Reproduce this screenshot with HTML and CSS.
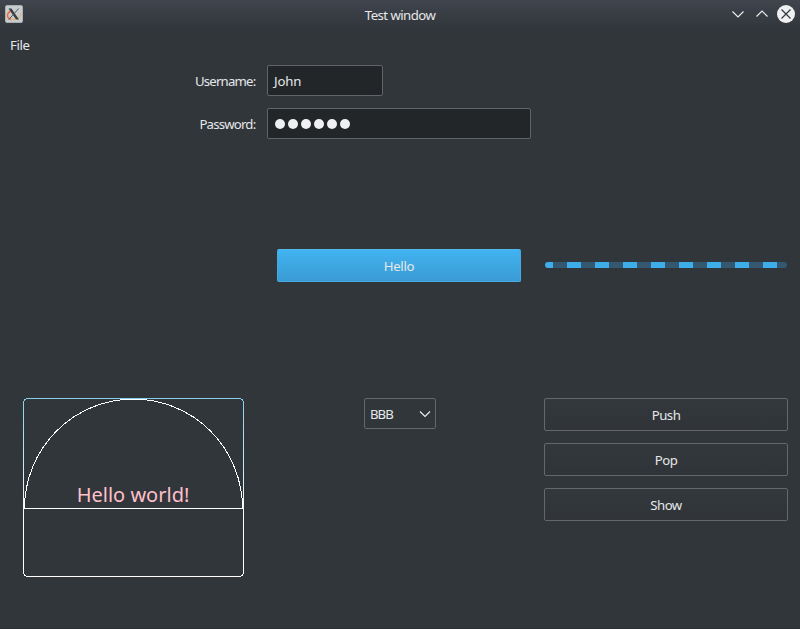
FILE: index.html
```html
<!DOCTYPE html>
<html lang="en">
<head>
<meta charset="utf-8">
<title>Test window</title>
<link rel="stylesheet" href="styles.css">
</head>
<body>
<div class="window">
  <header class="titlebar">
    <svg class="app-icon" width="18" height="18" viewBox="0 0 18 18">
      <rect x=".5" y=".5" width="17" height="17" rx="1.5" fill="#c9ccce" stroke="#aaaeb1"/>
      <path d="M6.500 6C1.500 7.500 1 13 6 14.300" fill="none" stroke="#f06a3c" stroke-width="1.500"/>
      <path d="M6 14.300C11 15.500 17 12 15.500 8" fill="none" stroke="#dfb583" stroke-width="1.300"/>
      <path d="M3.500 3.500h3l7.500 11h-3z" fill="#3a3e41"/>
      <path d="M13.700 3.500L3.800 14.500" stroke="#54585a" stroke-width="1"/>
    </svg>
    <span class="title">Test window</span>
    <div class="controls">
      <svg width="18" height="18" viewBox="0 0 18 18"><path d="M3.500 6.500L9 12l5.500-5.500" class="stroke"/></svg>
      <svg width="18" height="18" viewBox="0 0 18 18"><path d="M3.500 11.500L9 6l5.500 5.500" class="stroke"/></svg>
      <svg width="18" height="18" viewBox="0 0 18 18"><circle cx="9" cy="9" r="9" fill="#eff0f1"/><path d="M4.500 4.500l9 9m0-9l-9 9" class="cross"/></svg>
    </div>
  </header>
  <nav class="menubar"><span>File</span></nav>
  <main>
    <section class="form">
      <label>Username:</label><div class="field short">John</div>
      <label>Password:</label><div class="field long"><i class="dot"></i><i class="dot"></i><i class="dot"></i><i class="dot"></i><i class="dot"></i><i class="dot"></i></div>
    </section>
    <section class="middle">
      <div class="button primary">Hello</div>
      <div class="progress"></div>
    </section>
    <section class="bottom">
      <svg class="canvas" width="221" height="179" viewBox="0 0 221 179">
        <defs><linearGradient id="edge" gradientUnits="userSpaceOnUse" x1="0" y1="0" x2="0" y2="179"><stop offset="0" stop-color="#87ceeb"/><stop offset=".7" stop-color="#fff"/></linearGradient></defs>
        <rect x=".5" y=".5" width="220" height="178" rx="4.500" fill="none" stroke="url(#edge)" shape-rendering="crispEdges"/>
        <path d="M1.500 110.500A109 109.500 0 0 1 219.500 110.500Z" fill="none" stroke="#fff" shape-rendering="crispEdges"/>
        <text x="110" y="104" text-anchor="middle" class="greeting">Hello world!</text>
      </svg>
      <div class="combo"><span>BBB</span><svg width="12" height="8" viewBox="0 0 12 8"><path d="M1 1.500l5 5 5-5" class="stroke"/></svg></div>
      <div class="stack">
        <div class="button">Push</div>
        <div class="button">Pop</div>
        <div class="button">Show</div>
      </div>
    </section>
  </main>
</div>
</body>
</html>
```
FILE: styles.css
```css
* { box-sizing: border-box; }
body {
  margin: 0;
  background: #31363b;
  color: #e6e8e9;
  font: 13.2px/18px "Noto Sans", sans-serif;
  letter-spacing: -.6px;
}
.window {
  height: 629px;
  background: linear-gradient(#40454e 0, #31363b 30px);
  border-bottom: 1px solid #2c2f34;
}
.titlebar {
  height: 30px;
  display: grid;
  grid-template-columns: 1fr auto 1fr;
  padding: 5px 5px 0;
}
.title { padding-top: 1px; letter-spacing: -.55px; }
.controls { display: flex; justify-content: flex-end; gap: 6px; }
.stroke { fill: none; stroke: #eff0f1; stroke-width: 1.1; }
.cross { fill: none; stroke: #31363b; stroke-width: 1.2; }
.menubar { height: 35px; padding: 6px 10px; letter-spacing: -.4px; }
.form {
  display: grid;
  grid-template-columns: 244px 264px;
  grid-auto-rows: 31px;
  column-gap: 11px;
  row-gap: 12px;
  padding-left: 12px;
  height: 184px;
}
.form label { text-align: right; padding: 7px .6px 0 0; letter-spacing: -.8px; }
.field {
  display: flex;
  align-items: center;
  border: 1px solid #616569;
  border-radius: 2px;
  background: #232629;
  padding: 0 6px;
}
.short { width: 116px; letter-spacing: -.2px; }
.long { gap: 3px; padding-left: 7px; }
.dot { width: 10px; height: 10px; border-radius: 50%; background: #eff0f1; }
.middle {
  display: grid;
  grid-template-columns: 244px 242px;
  column-gap: 24px;
  padding-left: 277px;
  height: 149px;
}
.button {
  height: 33px;
  display: flex;
  align-items: center;
  justify-content: center;
  border: 1px solid #64686c;
  border-radius: 2px;
  background: linear-gradient(#33383d, #303439);
}
.primary {
  border-color: #47abe3;
  border-top-color: #52b6ee;
  background: linear-gradient(#41b3f1, #3a9bd3);
  letter-spacing: -.3px;
}
.progress {
  height: 6px;
  margin-top: 13px;
  border-radius: 3px;
  background: repeating-linear-gradient(90deg, #3daee9 0 14px, #34586f 14px 28px) -6px 0 / 280px 6px;
}
.bottom {
  display: grid;
  grid-template-columns: 341px 180px 244px;
  align-items: start;
  padding: 0 12px 0 23px;
}
.canvas { display: block; }
.greeting { font-size: 20px; letter-spacing: 0; fill: #ffc0cb; }
.combo {
  height: 31px;
  width: 72px;
  display: flex;
  align-items: center;
  justify-content: space-between;
  border: 1px solid #64686c;
  border-radius: 2px;
  padding: 0 4px 0 5px;
  letter-spacing: -1px;
}
.stack { display: grid; gap: 12px; letter-spacing: -.5px; }
```
